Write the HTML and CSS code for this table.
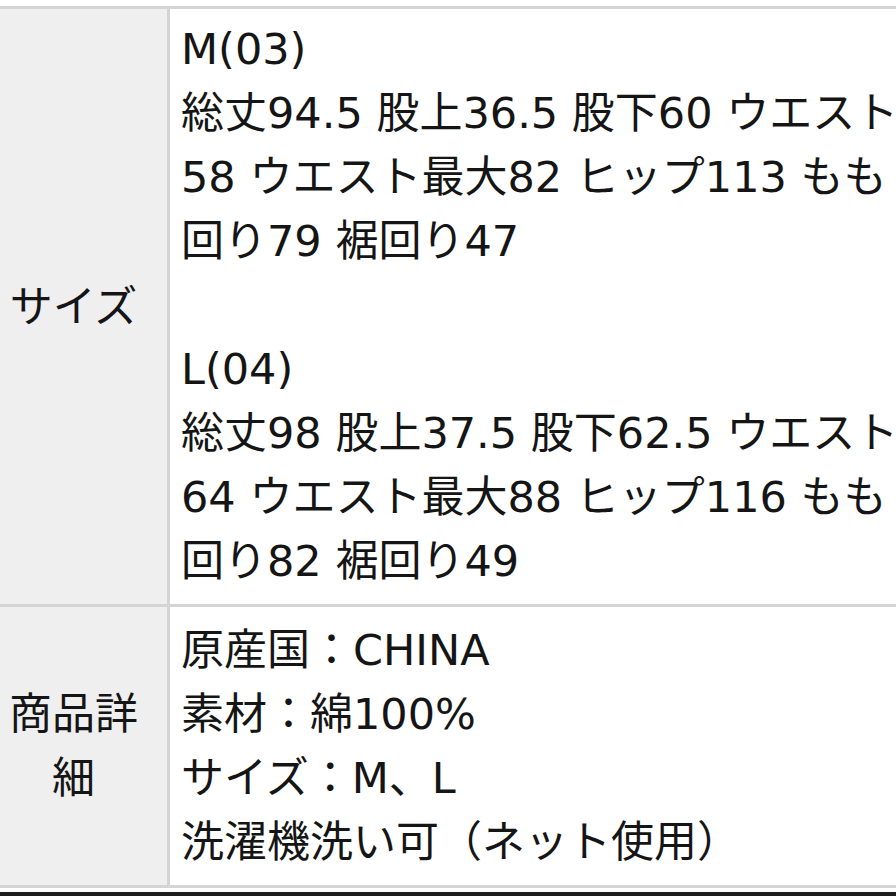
FILE: index.html
```html
<!DOCTYPE html>
<html lang="ja">
<head>
<meta charset="utf-8">
<title>商品詳細</title>
<link rel="stylesheet" href="styles.css">
</head>
<body>
<div class="page">
  <div class="spec">
    <div class="row row-size">
      <div class="label">サイズ</div>
      <div class="value">
        M(03)<br>
        総丈94.5 股上36.5 股下60 ウエスト<br>
        58 ウエスト最大82 ヒップ113 もも<br>
        回り79 裾回り47<br>
        <br>
        L(04)<br>
        総丈98 股上37.5 股下62.5 ウエスト<br>
        64 ウエスト最大88 ヒップ116 もも<br>
        回り82 裾回り49
      </div>
    </div>
    <div class="row row-detail">
      <div class="label">商品詳細</div>
      <div class="value">
        原産国：CHINA<br>
        素材：綿100%<br>
        サイズ：M、L<br>
        洗濯機洗い可（ネット使用）
      </div>
    </div>
  </div>
  <div class="bottom-bar"></div>
</div>
</body>
</html>
```

FILE: styles.css
```css
html, body {
  margin: 0;
  padding: 0;
  background: #ffffff;
  overflow: hidden;
}

.page {
  width: 896px;
  height: 896px;
  overflow: hidden;
  padding-top: 6px;
  box-sizing: border-box;
  font-family: "DejaVu Sans", "Noto Sans CJK JP", sans-serif;
  font-size: 43px;
  line-height: 64px;
  color: #151515;
}

.spec {
  width: 1100px;
  border-top: 3px solid #d4d4d4;
  border-bottom: 3px solid #d4d4d4;
}

.row {
  display: flex;
}

.row + .row {
  border-top: 3px solid #d4d4d4;
}

.label {
  width: 143px;
  flex: none;
  padding: 0 22px 0 2px;
  background: #efefef;
  border-right: 3px solid #d4d4d4;
  display: flex;
  align-items: center;
  justify-content: center;
  text-align: center;
}

.value {
  flex: 1;
  padding-left: 11px;
  white-space: nowrap;
}

.row-size .value {
  padding-top: 8px;
  padding-bottom: 11px;
}

.row-detail .value {
  padding-top: 11px;
  padding-bottom: 11px;
}

.bottom-bar {
  margin-top: 4px;
  height: 6px;
  background: #1e1e1e;
  width: 100%;
}
```
